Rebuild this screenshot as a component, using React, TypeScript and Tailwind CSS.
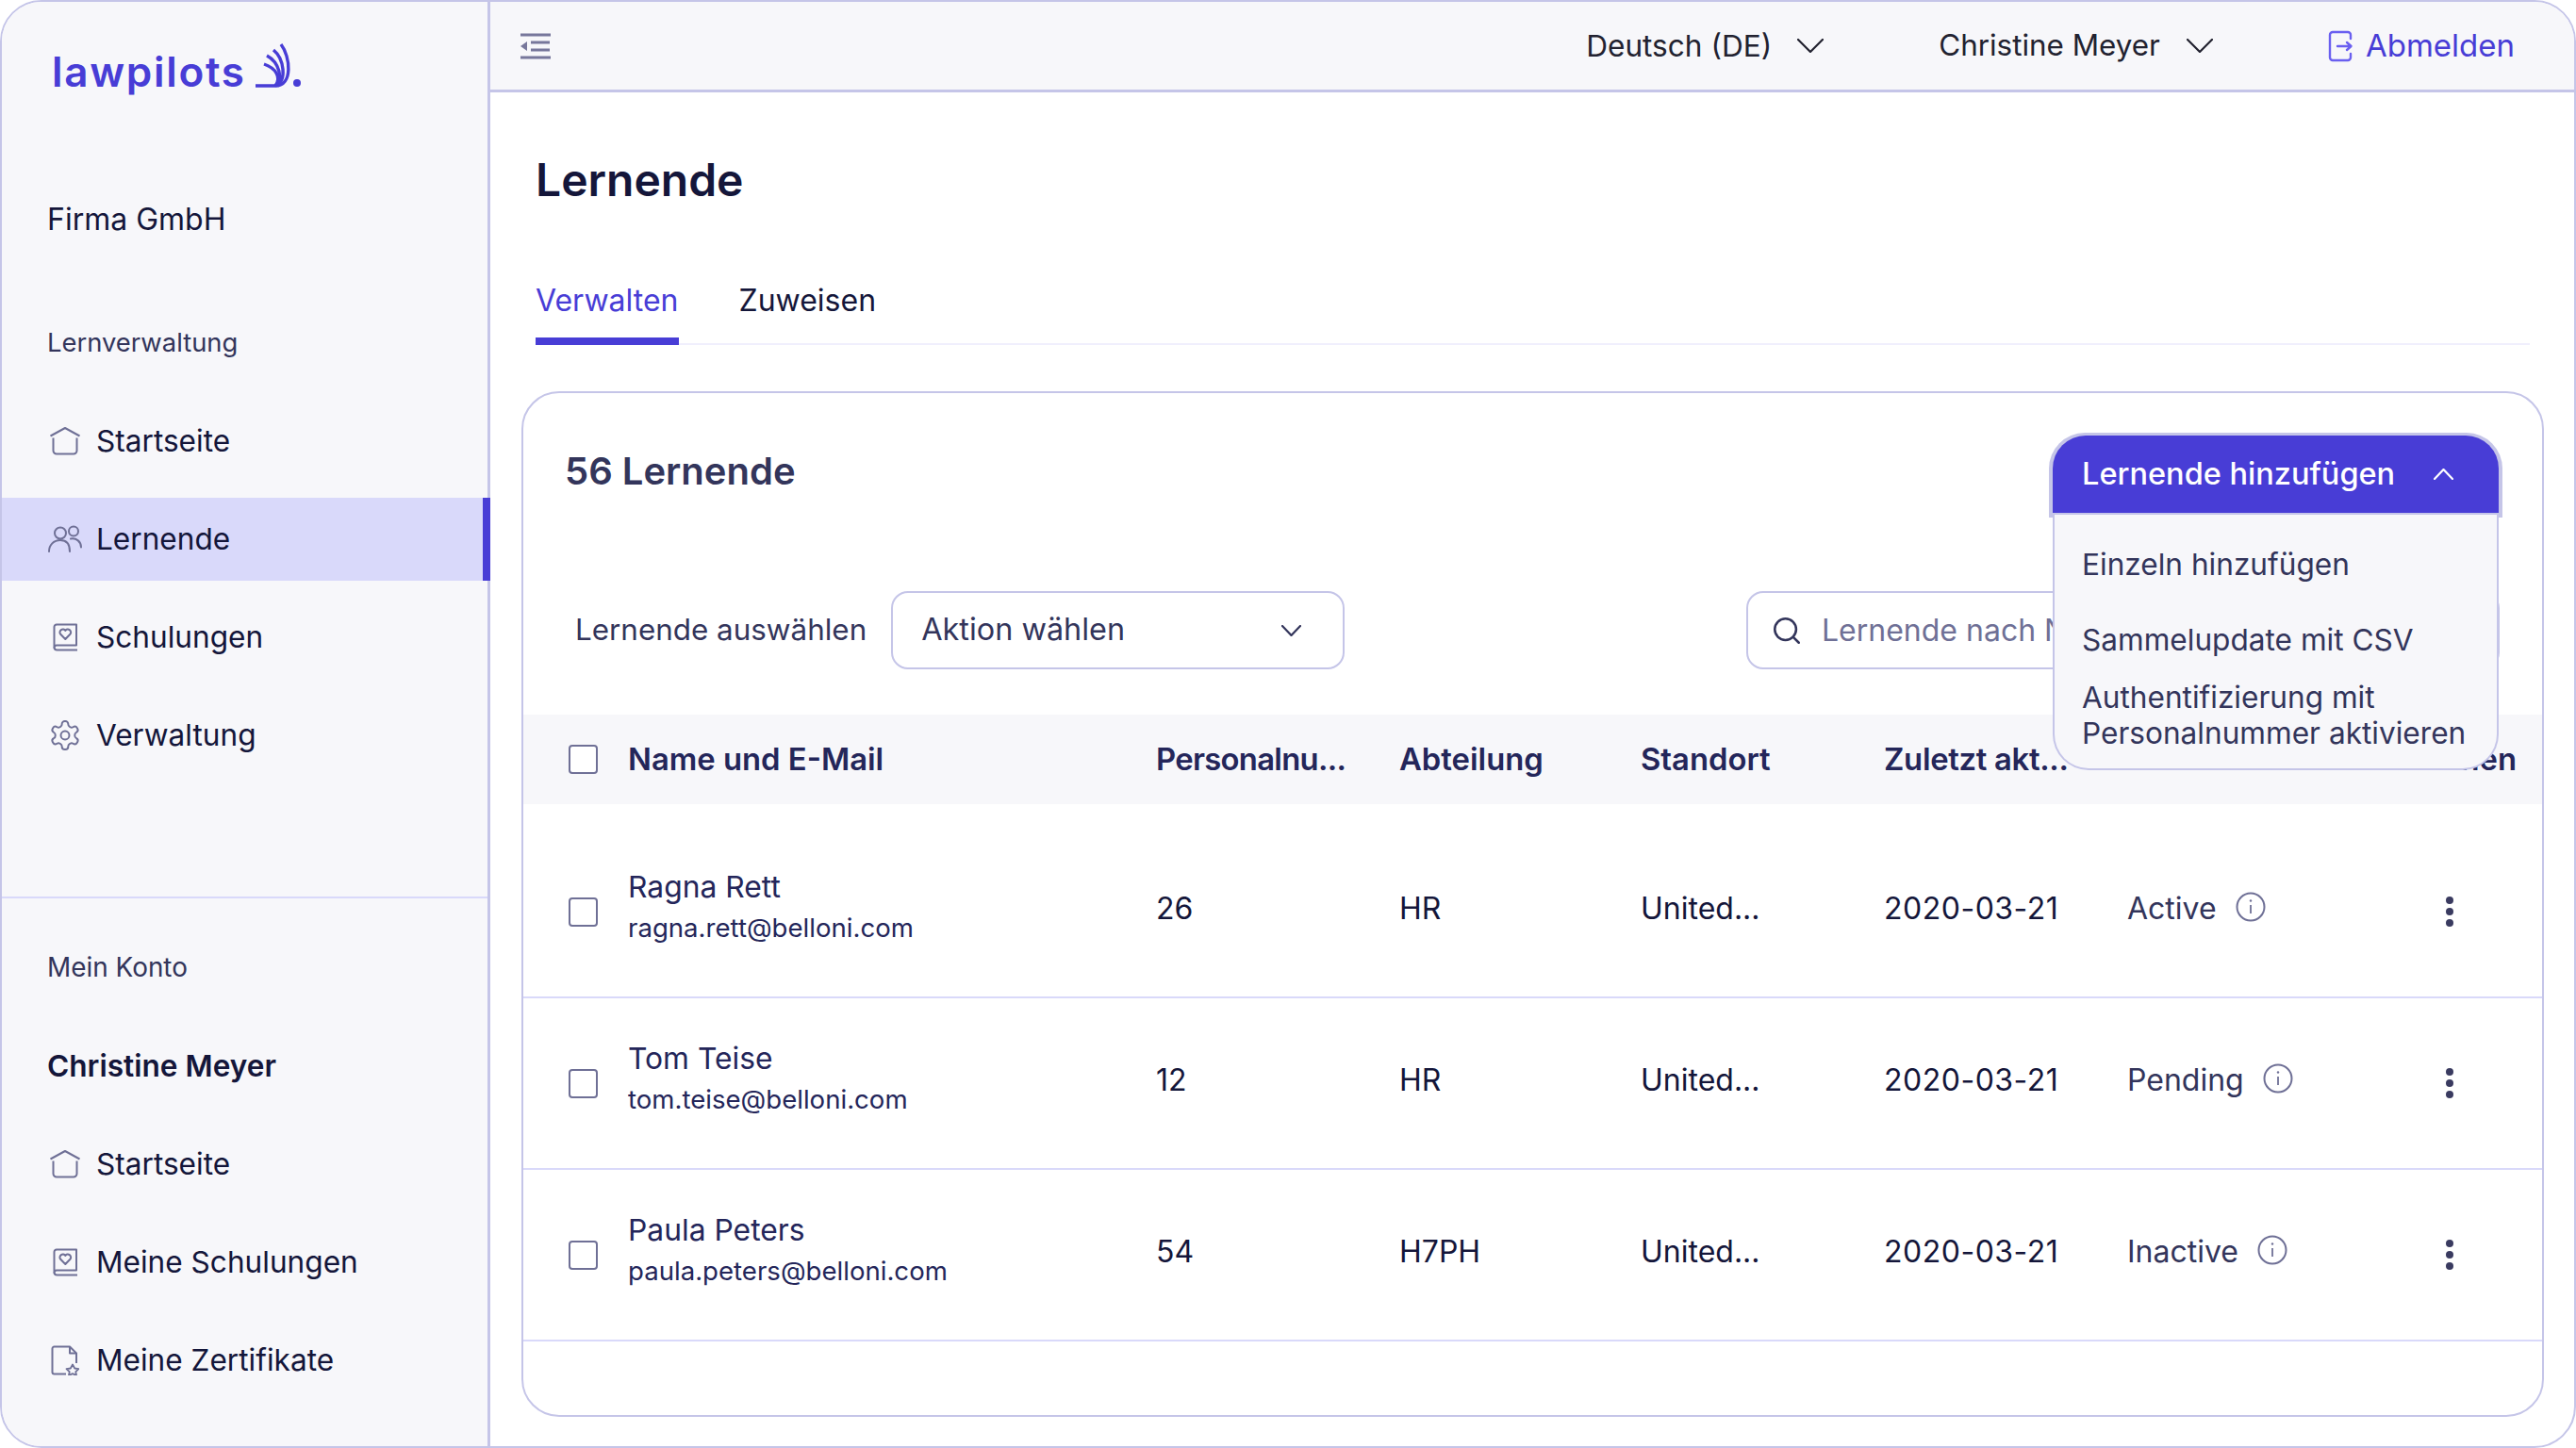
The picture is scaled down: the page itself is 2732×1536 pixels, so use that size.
import { Search } from 'lucide-react'

const border = 'border-[#c5c5e8]'

function HomeIcon() {
  return (
    <svg width="32" height="30" viewBox="0 0 32 30" fill="none" stroke="#6f7096" strokeWidth="2" strokeLinejoin="round">
      <path d="M0.5 9.5 L16 1 L31.5 9.5" />
      <path d="M3.5 11.5 V25 a3.5 3.5 0 0 0 3.5 3.5 H25 a3.5 3.5 0 0 0 3.5-3.5 V11.5" />
    </svg>
  )
}

function UsersIcon() {
  return (
    <svg width="36" height="30" viewBox="0 0 36 30" fill="none" stroke="#6f7096" strokeWidth="2" strokeLinecap="round">
      <circle cx="13" cy="8.5" r="6" />
      <circle cx="27" cy="6.5" r="5" />
      <path d="M1 28 c0-7 5-12 12-12 s10 5 10 12" />
      <path d="M24 14.5 c6-1 11 3 11 9" />
    </svg>
  )
}

function BookIcon() {
  return (
    <svg width="27" height="30" viewBox="0 0 27 30" fill="none" stroke="#6f7096" strokeWidth="2" strokeLinejoin="round">
      <path d="M4 1.5 H25 V23.5 H4 a2.5 2.5 0 0 0-2.5 2.5 V4 a2.5 2.5 0 0 1 2.5-2.5 Z" />
      <path d="M1.5 25.5 a3 3 0 0 0 3 3 H26" />
      <path d="M13.3 17 L8 11.5 a3.2 3.2 0 0 1 5.3-3.6 a3.2 3.2 0 0 1 5.3 3.6 Z" />
    </svg>
  )
}

function GearIcon() {
  return (
    <svg width="38" height="38" viewBox="0 0 24 24" fill="none" stroke="#6f7096" strokeWidth="1.3" strokeLinecap="round" strokeLinejoin="round">
      <path d="M12.22 2h-.44a2 2 0 0 0-2 2v.18a2 2 0 0 1-1 1.73l-.43.25a2 2 0 0 1-2 0l-.15-.08a2 2 0 0 0-2.73.73l-.22.38a2 2 0 0 0 .73 2.73l.15.1a2 2 0 0 1 1 1.72v.51a2 2 0 0 1-1 1.74l-.15.09a2 2 0 0 0-.73 2.73l.22.38a2 2 0 0 0 2.73.73l.15-.08a2 2 0 0 1 2 0l.43.25a2 2 0 0 1 1 1.73V20a2 2 0 0 0 2 2h.44a2 2 0 0 0 2-2v-.18a2 2 0 0 1 1-1.73l.43-.25a2 2 0 0 1 2 0l.15.08a2 2 0 0 0 2.73-.73l.22-.39a2 2 0 0 0-.73-2.73l-.15-.08a2 2 0 0 1-1-1.74v-.5a2 2 0 0 1 1-1.74l.15-.09a2 2 0 0 0 .73-2.73l-.22-.38a2 2 0 0 0-2.73-.73l-.15.08a2 2 0 0 1-2 0l-.43-.25a2 2 0 0 1-1-1.73V4a2 2 0 0 0-2-2z" />
      <circle cx="12" cy="12" r="3" />
    </svg>
  )
}

function CertIcon() {
  return (
    <svg width="30" height="32" viewBox="0 0 30 32" fill="none" stroke="#6f7096" strokeWidth="2" strokeLinejoin="round">
      <path d="M16 30.5 H3.5 a2 2 0 0 1-2-2 V3.5 a2 2 0 0 1 2-2 H20 L27 8.5 V19" />
      <path d="M20 1.5 V8.5 H27" />
      <path d="M23 20.5 l2.2 4 4.3.6 -3.2 3 .8 4 -4.1-2 -4.1 2 .8-4 -3.2-3 4.3-.6 Z" strokeWidth="1.8" />
    </svg>
  )
}

function CollapseIcon() {
  return (
    <svg width="32" height="28" viewBox="0 0 32 28" fill="none" stroke="#77779b" strokeWidth="3">
      <path d="M0 2 H32 M11 10 H31 M11 18 H31 M0 26 H32" />
      <path d="M0 14 L7 9 V19 Z" fill="#77779b" stroke="none" />
    </svg>
  )
}

function LogoutIcon() {
  return (
    <svg width="28" height="34" viewBox="0 0 28 34" fill="none" stroke="#6a5ff0" strokeWidth="2.4" strokeLinecap="round" strokeLinejoin="round">
      <path d="M24 9 V5 a3 3 0 0 0-3-3 H5 a3 3 0 0 0-3 3 V29 a3 3 0 0 0 3 3 H21 a3 3 0 0 0 3-3 V25" />
      <path d="M10 17 H24 M20 13 L24.5 17 L20 21" />
    </svg>
  )
}

function InfoIcon() {
  return (
    <svg width="32" height="32" viewBox="0 0 32 32" fill="none" stroke="#6f7096" strokeWidth="2">
      <circle cx="16" cy="16" r="14.5" />
      <path d="M16 14 V23" strokeWidth="1.8" />
      <circle cx="16" cy="9.5" r="1.2" fill="#6f7096" stroke="none" />
    </svg>
  )
}

function DotsIcon() {
  return (
    <svg width="10" height="32" viewBox="0 0 10 32" fill="#3a3b60">
      <circle cx="5" cy="4" r="4" />
      <circle cx="5" cy="16" r="4" />
      <circle cx="5" cy="28" r="4" />
    </svg>
  )
}

function Chev({ w, h, color, up }: { w: number; h: number; color: string; up?: boolean }) {
  return (
    <svg width={w} height={h} viewBox={`0 0 ${w} ${h}`} fill="none" stroke={color} strokeWidth="2.2" strokeLinecap="round" strokeLinejoin="round" className="shrink-0">
      <path d={up ? `M1 ${h - 1} L${w / 2} 1 L${w - 1} ${h - 1}` : `M1 1 L${w / 2} ${h - 1} L${w - 1} 1`} />
    </svg>
  )
}

function LogoMark() {
  return (
    <svg width="54" height="52" viewBox="0 0 54 52" fill="none" stroke="#483dd6" strokeWidth="3.4" strokeLinecap="butt">
      <path d="M3 47 H24 C43 47 40 16 30 3" />
      <path d="M24 47 C37 42 33 18 22 9" />
      <path d="M24 47 C33 40 28 22 15 15" />
      <path d="M24 47 C31 38 24 28 12 24" />
      <circle cx="47" cy="44" r="4" fill="#483dd6" stroke="none" />
    </svg>
  )
}

function Checkbox() {
  return <span className="block w-[31px] h-[31px] rounded-[4px] border-2 border-[#6f7096] bg-white shrink-0" />
}

function NavItem({ icon, label, active }: { icon: React.ReactNode; label: string; active?: boolean }) {
  return (
    <div className={`flex items-center h-[88px] pl-[49px] pr-2 text-[31.6px] text-[#14163a] ${active ? 'bg-[#d9d9fa] border-r-[8px] border-[#483dd6] -mr-[3px]' : ''}`}>
      <span className="w-[36px] h-[38px] flex items-center justify-center shrink-0">{icon}</span>
      <span className="ml-[15px]">{label}</span>
    </div>
  )
}

const rowGrid = 'grid grid-cols-[63px_560px_258px_256px_258px_258px_1fr] items-center pl-[48px]'

const learners = [
  { name: 'Ragna Rett', email: 'ragna.rett@belloni.com', nr: '26', dept: 'HR', status: 'Active' },
  { name: 'Tom Teise', email: 'tom.teise@belloni.com', nr: '12', dept: 'HR', status: 'Pending' },
  { name: 'Paula Peters', email: 'paula.peters@belloni.com', nr: '54', dept: 'H7PH', status: 'Inactive' },
]

export default function App() {
  return (
    <div className={`w-[2732px] h-[1536px] bg-white border-[2px] ${border} rounded-[44px] overflow-hidden flex font-['Inter',sans-serif] text-[#14163a] relative`}>
      <aside className={`w-[518px] shrink-0 bg-[#f7f7fa] border-r-[3px] ${border} flex flex-col`}>
        <div className="h-[151px] pl-[53px] pt-[46px] flex items-start shrink-0">
          <span className="text-[44px] leading-[56px] font-semibold text-[#483dd6] tracking-[1.7px]">lawpilots</span>
          <span className="ml-[7px] -mt-[4px]"><LogoMark /></span>
        </div>
        <div className="pl-[48px] text-[32px] leading-[40px] mt-[60px]">Firma GmbH</div>
        <div className="pl-[48px] text-[27.4px] leading-[36px] mt-[92px] text-[#33355b]">Lernverwaltung</div>
        <div className="flex flex-col gap-[16px] mt-[43px]">
          <NavItem icon={<HomeIcon />} label="Startseite" />
          <NavItem icon={<UsersIcon />} label="Lernende" active />
          <NavItem icon={<BookIcon />} label="Schulungen" />
          <NavItem icon={<GearIcon />} label="Verwaltung" />
        </div>
        <div className="border-t-[2px] border-[#d9d9fa] mt-[127px] pt-[55px]">
          <div className="pl-[48px] text-[27.9px] leading-[36px] text-[#33355b]">Mein Konto</div>
          <div className="pl-[48px] text-[31.6px] leading-[40px] font-semibold mt-[67px]">Christine Meyer</div>
          <div className="flex flex-col gap-[16px] mt-[40px]">
            <NavItem icon={<HomeIcon />} label="Startseite" />
            <NavItem icon={<BookIcon />} label="Meine Schulungen" />
            <NavItem icon={<CertIcon />} label="Meine Zertifikate" />
          </div>
        </div>
      </aside>

      <main className="flex-1 min-w-0 flex flex-col relative">
        <header className={`h-[96px] shrink-0 bg-[#f7f7fa] border-b-[3px] ${border} flex items-center pl-[32px] pr-[63px] text-[31.6px] text-[#222230]`}>
          <CollapseIcon />
          <div className="ml-auto flex items-center">
            <span>Deutsch (DE)</span>
            <span className="ml-[27px]"><Chev w={28} h={15} color="#222230" /></span>
            <span className="ml-[122px] text-[31.4px]">Christine Meyer</span>
            <span className="ml-[28px]"><Chev w={28} h={15} color="#222230" /></span>
            <span className="ml-[122px] mr-[12px]"><LogoutIcon /></span>
            <span className="text-[#483dd6] text-[33px]">Abmelden</span>
          </div>
        </header>

        <div className="flex-1 min-h-0 flex flex-col pl-[33px] pr-[32px]">
          <h1 className="text-[48px] leading-[60px] font-semibold mt-[63px] pl-[15px] text-[#14163a]">Lernende</h1>
          <div className="ml-[15px] mr-[15px] flex gap-[64px] border-b-[2px] border-[#f0effd] mt-[78px] text-[32px]">
            <div className="text-[#483dd6] border-b-[8px] border-[#483dd6] -mb-[2px] pb-[19px] leading-[40px]">Verwalten</div>
            <div className="leading-[40px]">Zuweisen</div>
          </div>

          <section className={`mt-[49px] h-[1088px] border-[2px] ${border} rounded-[40px] bg-white overflow-hidden`}>
            <div className="h-[210px] pl-[44px] pt-[58px] text-[40px] leading-[50px] font-semibold text-[#33355b]">56 Lernende</div>
            <div className="h-[131px] flex items-start pl-[55px] pr-[45px]">
              <span className="text-[31.4px] leading-[82px] text-[#33355b]">Lernende auswählen</span>
              <div className={`ml-[26px] w-[481px] h-[83px] border-[2px] ${border} rounded-[18px] flex items-center pl-[30px] pr-[44px] text-[32.4px] text-[#33355b]`}>
                Aktion wählen
                <span className="ml-auto"><Chev w={21} h={12} color="#33355b" /></span>
              </div>
              <div className={`ml-auto w-[799px] h-[83px] border-[2px] ${border} rounded-[18px] flex items-center pl-[24px] text-[32px] text-[#6f7096] overflow-hidden whitespace-nowrap`}>
                <Search size={34} strokeWidth={1.8} className="text-[#33355b] shrink-0" />
                <span className="ml-[20px]">Lernende nach Name oder E-Mail suchen</span>
              </div>
            </div>

            <div className={`${rowGrid} h-[95px] bg-[#f7f7fa] text-[32.8px] font-semibold text-[#24265a] whitespace-nowrap`}>
              <Checkbox />
              <span>Name und E-Mail</span>
              <span className="tracking-[-0.7px]">Personalnu...</span>
              <span>Abteilung</span>
              <span>Standort</span>
              <span className="tracking-[-0.3px]">Zuletzt akt...</span>
              <div className="flex justify-between pr-[27px]"><span>Status</span><span>Aktionen</span></div>
            </div>

            <div className="mt-[24px]">
              {learners.map((l) => (
                <div key={l.email} className={`${rowGrid} h-[182px] border-b-[2px] border-[#d9d9fa] text-[32px] whitespace-nowrap`}>
                  <Checkbox />
                  <div className="text-[#24265a] pb-[11px]">
                    <div className="leading-[40px] text-[31.8px]">{l.name}</div>
                    <div className="text-[27.6px] leading-[36px] mt-[5px]">{l.email}</div>
                  </div>
                  <span className="pb-[7px]">{l.nr}</span>
                  <span className="pb-[7px]">{l.dept}</span>
                  <span className="pb-[7px]">United...</span>
                  <span className="pb-[7px] tracking-[0.5px]">2020-03-21</span>
                  <div className="flex items-center pr-[93px]">
                    <span className="pb-[7px] text-[#33355b] mr-[20px]">{l.status}</span>
                    <span className="pb-[11px]"><InfoIcon /></span>
                    <span className="ml-auto"><DotsIcon /></span>
                  </div>
                </div>
              ))}
            </div>
          </section>
        </div>

        <div className="absolute left-[1653px] top-[457px] w-[481px] flex flex-col text-[31.6px] text-[#33355b]">
          <div className="h-[90px] bg-[#c5c5e8] rounded-t-[38px] px-[4px] pt-[3px]">
            <div className="h-[82px] bg-[#483dd6] rounded-t-[35px] text-white text-[32.5px] font-medium flex items-center pl-[31px] pr-[48px]">
              Lernende hinzufügen
              <span className="ml-auto"><Chev w={21} h={12} color="#ffffff" up /></span>
            </div>
          </div>
          <div className={`relative -mt-[3px] mx-[4px] h-[271px] bg-[#f7f7fa] border-[2px] border-t-0 ${border} rounded-b-[38px] pl-[29px] pt-[34px] leading-[38px]`}>
            <div>Einzeln hinzufügen</div>
            <div className="mt-[42px]">Sammelupdate mit CSV</div>
            <div className="mt-[23px]">Authentifizierung mit<br />Personalnummer aktivieren</div>
          </div>
        </div>
      </main>
    </div>
  )
}
